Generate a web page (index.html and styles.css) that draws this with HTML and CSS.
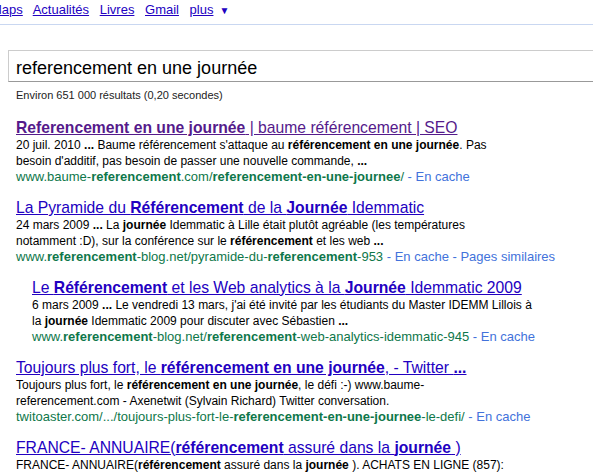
FILE: index.html
```html
<!DOCTYPE html>
<html lang="fr">
<head>
    <meta charset="UTF-8">
    <title>referencement en une journée - Recherche Google</title>
    <link rel="stylesheet" href="styles.css">
</head>
<body>

<div class="gbar">
    <a href="#">Maps</a>
    <a href="#">Actualités</a>
    <a href="#">Livres</a>
    <a href="#">Gmail</a>
    <a href="#" class="more">plus</a><span class="arrow">&#9660;</span>
</div>

<div class="searchbox">referencement en une journée</div>

<div class="stats">Environ 651 000 résultats (0,20 secondes)</div>

<ol class="results">
    <li class="result">
        <h3><a href="#" class="visited"><b>Referencement en une journée</b> | baume référencement | SEO</a></h3>
        <div class="snippet">
            20 juil. 2010 <b>...</b> Baume référencement s'attaque au <b>référencement en une journée</b>. Pas<br>
            besoin d'additif, pas besoin de passer une nouvelle commande, <b>...</b><br>
            <span class="url"><cite>www.baume-<b>referencement</b>.com/<b>referencement-en-une-journee</b>/</cite><span class="gl"> - <a href="#">En cache</a></span></span>
        </div>
    </li>
    <li class="result">
        <h3><a href="#">La Pyramide du <b>Référencement</b> de la <b>Journée</b> Idemmatic</a></h3>
        <div class="snippet">
            24 mars 2009 <b>...</b> La <b>journée</b> Idemmatic à Lille était plutôt agréable (les températures<br>
            notamment :D), sur la conférence sur le <b>référencement</b> et les web <b>...</b><br>
            <span class="url"><cite>www.<b>referencement</b>-blog.net/pyramide-du-<b>referencement</b>-953</cite><span class="gl"> - <a href="#">En cache</a> - <a href="#">Pages similaires</a></span></span>
        </div>
    </li>
    <li class="result sub">
        <h3><a href="#">Le <b>Référencement</b> et les Web analytics à la <b>Journée</b> Idemmatic 2009</a></h3>
        <div class="snippet">
            6 mars 2009 <b>...</b> Le vendredi 13 mars, j'ai été invité par les étudiants du Master IDEMM Lillois à<br>
            la <b>journée</b> Idemmatic 2009 pour discuter avec Sébastien <b>...</b><br>
            <span class="url"><cite>www.<b>referencement</b>-blog.net/<b>referencement</b>-web-analytics-idemmatic-945</cite><span class="gl"> - <a href="#">En cache</a></span></span>
        </div>
    </li>
    <li class="result">
        <h3><a href="#">Toujours plus fort, le <b>référencement en une journée</b>, - Twitter <b>...</b></a></h3>
        <div class="snippet">
            Toujours plus fort, le <b>référencement en une journée</b>, le défi :-) www.baume-<br>
            referencement.com - Axenetwit (Sylvain Richard) Twitter conversation.<br>
            <span class="url"><cite>twitoaster.com/.../toujours-plus-fort-le-<b>referencement-en-une-journee</b>-le-defi/</cite><span class="gl"> - <a href="#">En cache</a></span></span>
        </div>
    </li>
    <li class="result">
        <h3><a href="#">FRANCE- ANNUAIRE(<b>référencement</b> assuré dans la <b>journée</b> )</a></h3>
        <div class="snippet">
            FRANCE- ANNUAIRE(<b>référencement</b> assuré dans la <b>journée</b> ). ACHATS EN LIGNE (857):
        </div>
    </li>
</ol>

</body>
</html>
```
FILE: styles.css
```css
html, body {
    margin: 0;
    padding: 0;
    overflow: hidden;
    background: #fff;
}
body {
    font-family: "Liberation Sans", Arial, sans-serif;
    color: #000;
}
.gbar {
    font-size: 13px;
    line-height: 16px;
    padding: 2px 0 5px;
    margin-left: -9px;
    border-bottom: 1px solid #c9d7f1;
    white-space: nowrap;
}
.gbar a {
    color: #2200c1;
    margin-right: 7px;
}
.gbar .more {
    margin-right: 6px;
}
.gbar .arrow {
    color: #2200c1;
    font-size: 10px;
}
.searchbox {
    margin: 25px 0 0 8px;
    width: 640px;
    height: 26px;
    padding: 4px 7px 0;
    border: 1px solid #ccc;
    border-bottom-color: #999;
    font-size: 18px;
    line-height: 26px;
    white-space: nowrap;
}
.stats {
    margin: 7px 0 0 16px;
    font-size: 11px;
    line-height: 13px;
    color: #222;
}
.results {
    list-style: none;
    margin: 16px 0 0;
    padding: 0 0 0 16px;
}
.result {
    margin-bottom: 13px;
    white-space: nowrap;
}
.result.sub {
    margin-left: 16px;
}
.result h3 {
    margin: 0;
    font-size: 15.7px;
    font-weight: normal;
    line-height: 19px;
}
.result h3 a {
    color: #2200c1;
}
.result h3 a.visited {
    color: #551a8b;
}
.snippet {
    font-size: 12px;
    line-height: 16px;
}
.url {
    font-size: 13px;
}
.url cite {
    font-style: normal;
    color: #0e774a;
}
.gl,
.gl a {
    color: #4272db;
    text-decoration: none;
}
```
